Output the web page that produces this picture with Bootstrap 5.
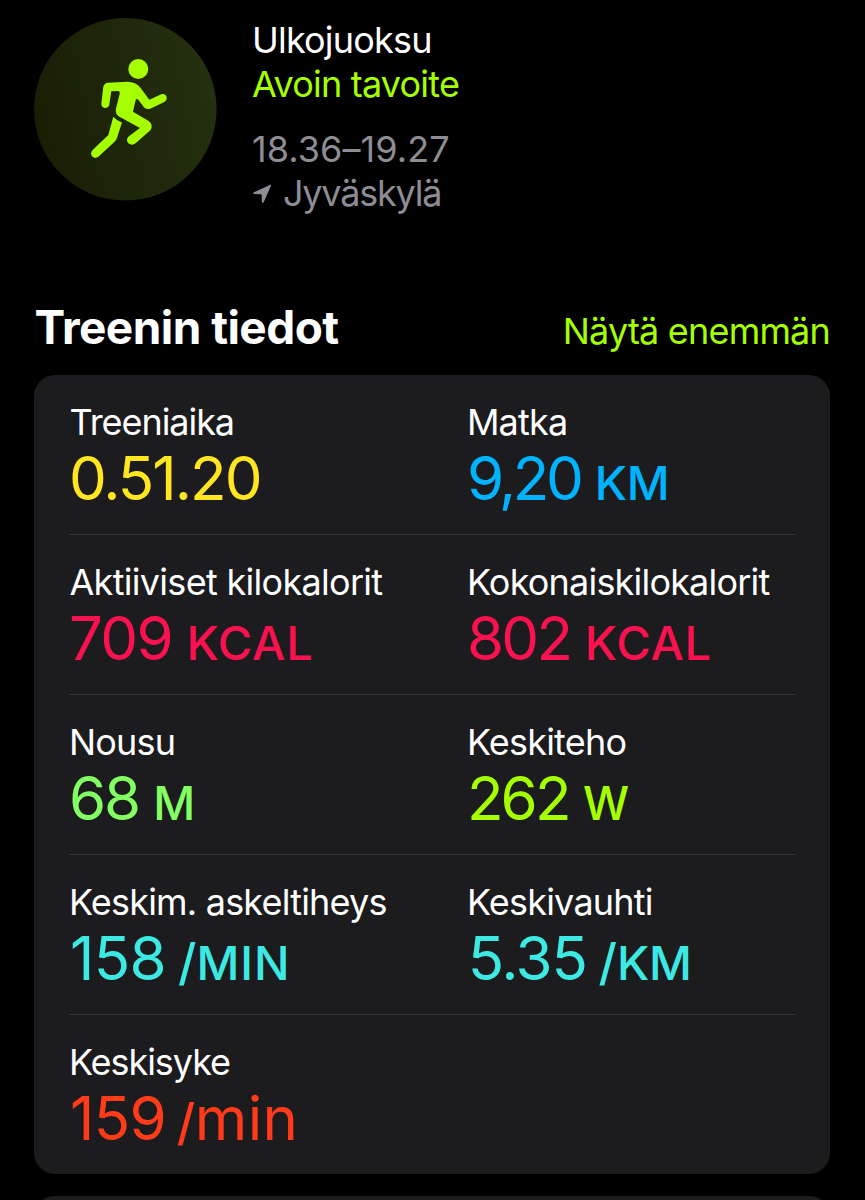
<!DOCTYPE html>
<html lang="fi" data-bs-theme="dark">
<head>
<meta charset="utf-8">
<meta name="viewport" content="width=device-width, initial-scale=1">
<title>Ulkojuoksu</title>
<link rel="stylesheet" href="https://cdn.jsdelivr.net/npm/bootstrap@5.3.0/dist/css/bootstrap.min.css">
<style>
  body { background: #000; color: #fff; font-family: Inter, "Liberation Sans", sans-serif; font-size: 36px; line-height: 44px; letter-spacing: -.8px; }
  .screen { height: 1200px; padding: 18px 35px 0 34.4px; }
  .run-icon { width: 182.6px; height: 182.6px; }
  .intro { height: 281px; gap: 35px; }
  .accent { color: #a6ff00; }
  .dim { color: #8d8d93; }
  .when { margin-top: 21px; letter-spacing: .08px; }
  .place { padding-left: 1px; letter-spacing: -1.2px; }
  .place svg { width: 20px; height: 20px; margin-right: 10px; }
  .section-title { font-size: 46px; line-height: 56px; font-weight: 700; letter-spacing: -.55px; }
  .section-head { height: 56px; margin-bottom: 20px; }
  .panel { background: #1c1c1e; border-radius: 21px; }
  .stats { height: 798.5px; padding: 0 34.5px; }
  .stat-row { height: 160px; padding-top: 25px; border-bottom: 1px solid #353537; }
  .stat-row:last-child { border-bottom: 0; }
  .cell { width: 398px; white-space: nowrap; }
  .cell + .cell { width: auto; }
  .nudge { padding-left: .6px; }
  .tight { letter-spacing: -1.05px; }
  .loose { letter-spacing: -.7px; }
  .figure-line { font-size: 60px; line-height: 60px; margin-top: 4px; }
  .unit { font-size: 47px; font-weight: 450; margin-left: 14.5px; letter-spacing: .8px; }
  .unit-m { letter-spacing: -.3px; }
  .unit-solo { font-size: 46px; }
  .slash { font-size: 50px; font-weight: 500; margin-left: 12px; letter-spacing: 0; }
  .slash + .unit { margin-left: 0; }
  .slash.close-up { margin-left: 10.5px; }
  .slash + .unit.lower { font-size: 60px; font-weight: 400; letter-spacing: .4px; margin-left: -.5px; }
  .n-time { letter-spacing: -1.95px; } .n-dist { letter-spacing: -3.5px; }
  .n-act { letter-spacing: -1.68px; } .n-tot { letter-spacing: -2.74px; }
  .n-asc { letter-spacing: -2.2px; } .n-pow { letter-spacing: -2.9px; }
  .n-rate { letter-spacing: -.6px; padding-left: 1px; } .n-pace { letter-spacing: -1.3px; padding-left: .8px; }
  .c-yellow { color: #ffe620; } .c-blue { color: #00b3ff; } .c-pink { color: #fa114f; }
  .c-green { color: #83ff63; } .c-teal { color: #3ce9e3; } .c-red { color: #ff3b1a; }
  .next-panel { height: 60px; margin-top: 22.5px; }
</style>
</head>
<body>
<main class="screen overflow-hidden">
  <header class="intro d-flex align-items-start">
    <svg class="run-icon flex-shrink-0" viewBox="44 39 548 548" aria-hidden="true">
      <defs><linearGradient id="disc" x1="0" y1=".6" x2="1" y2=".4"><stop offset="0" stop-color="#191d04"/><stop offset="1" stop-color="#243010"/></linearGradient></defs>
      <circle cx="318" cy="313" r="274" fill="url(#disc)"/>
      <g fill="#a6ff00">
        <circle cx="357" cy="192" r="30"/>
        <path d="M266 233 L323 230 Q350 230 364 249 L390 284 L426 268 Q436 264 441 273 Q446 284 435 291 L393 311 Q381 315 374 307 L357 284 Q352 279 349 286 L341 320 L388 348 Q404 360 393 376 L349 415 Q338 423 328 416 Q318 406 328 395 L362 369 L303 337 Q286 327 290 311 L301 267 Q303 258 295 258 L276 259 L270 299 Q267 309 257 309 Q246 307 246 296 L252 245 Q255 234 266 233 Z"/>
        <path d="M282 335 Q293 347 308 353 L293 399 Q291 406 285 411 L238 455 Q228 463 219 455 Q211 445 220 435 L267 390 Z"/>
      </g>
    </svg>
    <div>
      <div>Ulkojuoksu</div>
      <div class="accent">Avoin tavoite</div>
      <div class="when dim">18.36–19.27</div>
      <div class="place dim d-flex align-items-center">
        <svg viewBox="0 0 20 20" fill="currentColor" aria-hidden="true"><path d="M16.8 2 Q18.6 1.3 17.9 3.1 L10.8 19 Q9.6 20.9 8.9 19 L8.7 12.2 Q8.7 11.3 7.8 11.3 L1.2 11.1 Q-.9 10.4 1 9.2 Z"/></svg>
        <span>Jyväskylä</span>
      </div>
    </div>
  </header>

  <div class="section-head d-flex justify-content-between align-items-baseline">
    <h2 class="section-title mb-0">Treenin tiedot</h2>
    <span class="accent">Näytä enemmän</span>
  </div>

  <section class="panel stats">
    <div class="stat-row d-flex">
      <div class="cell"><div class="nudge tight">Treeniaika</div><div class="figure-line d-flex align-items-baseline c-yellow"><span class="n-time">0.51.20</span></div></div>
      <div class="cell"><div>Matka</div><div class="figure-line d-flex align-items-baseline c-blue"><span class="n-dist">9,20</span><span class="unit unit-m">KM</span></div></div>
    </div>
    <div class="stat-row d-flex">
      <div class="cell"><div class="nudge loose">Aktiiviset kilokalorit</div><div class="figure-line d-flex align-items-baseline c-pink"><span class="n-act">709</span><span class="unit">KCAL</span></div></div>
      <div class="cell"><div>Kokonaiskilokalorit</div><div class="figure-line d-flex align-items-baseline c-pink"><span class="n-tot">802</span><span class="unit">KCAL</span></div></div>
    </div>
    <div class="stat-row d-flex">
      <div class="cell"><div>Nousu</div><div class="figure-line d-flex align-items-baseline c-green"><span class="n-asc">68</span><span class="unit unit-solo">M</span></div></div>
      <div class="cell"><div>Keskiteho</div><div class="figure-line d-flex align-items-baseline accent"><span class="n-pow">262</span><span class="unit unit-solo">W</span></div></div>
    </div>
    <div class="stat-row d-flex">
      <div class="cell"><div>Keskim. askeltiheys</div><div class="figure-line d-flex align-items-baseline c-teal"><span class="n-rate">158</span><span class="slash">/</span><span class="unit">MIN</span></div></div>
      <div class="cell"><div>Keskivauhti</div><div class="figure-line d-flex align-items-baseline c-teal"><span class="n-pace">5.35</span><span class="slash">/</span><span class="unit unit-m">KM</span></div></div>
    </div>
    <div class="stat-row d-flex">
      <div class="cell"><div class="tight">Keskisyke</div><div class="figure-line d-flex align-items-baseline c-red"><span class="n-rate">159</span><span class="slash close-up">/</span><span class="unit lower">min</span></div></div>
    </div>
  </section>
  <section class="panel next-panel"></section>
</main>
<script src="https://cdn.jsdelivr.net/npm/bootstrap@5.3.0/dist/js/bootstrap.bundle.min.js"></script>
</body>
</html>
